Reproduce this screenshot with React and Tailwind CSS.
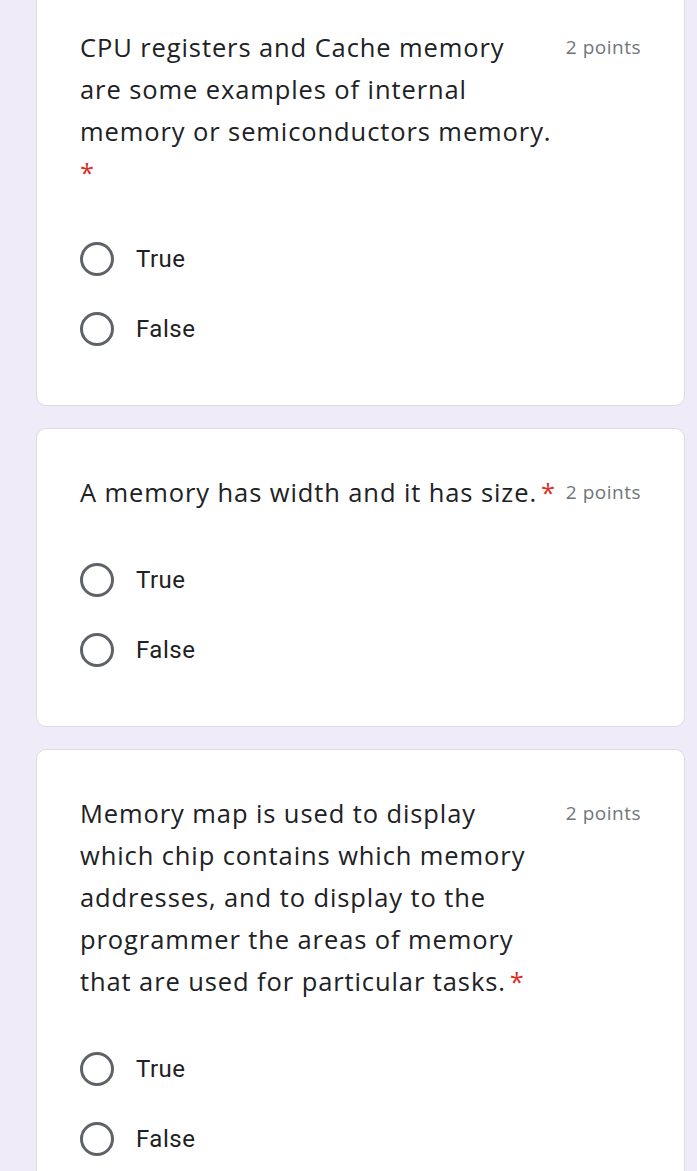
const questions = [
  {
    lines: ['CPU registers and Cache memory', 'are some examples of internal', 'memory or semiconductors memory.'],
    starOwnLine: true,
  },
  { lines: ['A memory has width and it has size.'] },
  {
    lines: [
      'Memory map is used to display',
      'which chip contains which memory',
      'addresses, and to display to the',
      'programmer the areas of memory',
      'that are used for particular tasks.',
    ],
  },
];

const Radio = ({ label }) => (
  <div className="flex items-center h-[70px]">
    <div className="w-[34px] h-[34px] rounded-full border-[3px] border-[#5f6368] shrink-0" />
    <span className="ml-[22px] text-[24px] tracking-[0.5px] text-[#202124] font-['Roboto',sans-serif]">{label}</span>
  </div>
);

const QuestionCard = ({ lines, starOwnLine, className = '' }) => (
  <div className={`bg-white border border-[#dadce0] rounded-[10px] px-[43px] pt-[42px] pb-[41px] ${className}`}>
    <div className="flex items-start justify-between">
      <div className="text-[25.5px] tracking-[0.9px] leading-[42px] text-[#202124] font-['Open_Sans',sans-serif] whitespace-nowrap">
        {lines.map((line, i) => (
          <div key={i}>
            {line}
            {!starOwnLine && i === lines.length - 1 && <span className="text-[#d93025] ml-[4px]">*</span>}
          </div>
        ))}
        {starOwnLine && <div className="text-[#d93025] leading-[40px]">*</div>}
      </div>
      <div className="text-[19px] tracking-[0.5px] leading-[42px] text-[#70757a] font-['Open_Sans',sans-serif] whitespace-nowrap">
        2 points
      </div>
    </div>
    <div className="mt-[32px]">
      <Radio label="True" />
      <Radio label="False" />
    </div>
  </div>
);

export default function App() {
  return (
    <div className="min-h-[1171px] bg-[#f0ebf8] pl-[36px] pr-[12px] overflow-hidden">
      <div className="flex flex-col gap-[22px]">
        {questions.map((q, i) => (
          <QuestionCard key={i} {...q} className={i === 0 ? '-mt-[17px]' : ''} />
        ))}
      </div>
    </div>
  );
}
